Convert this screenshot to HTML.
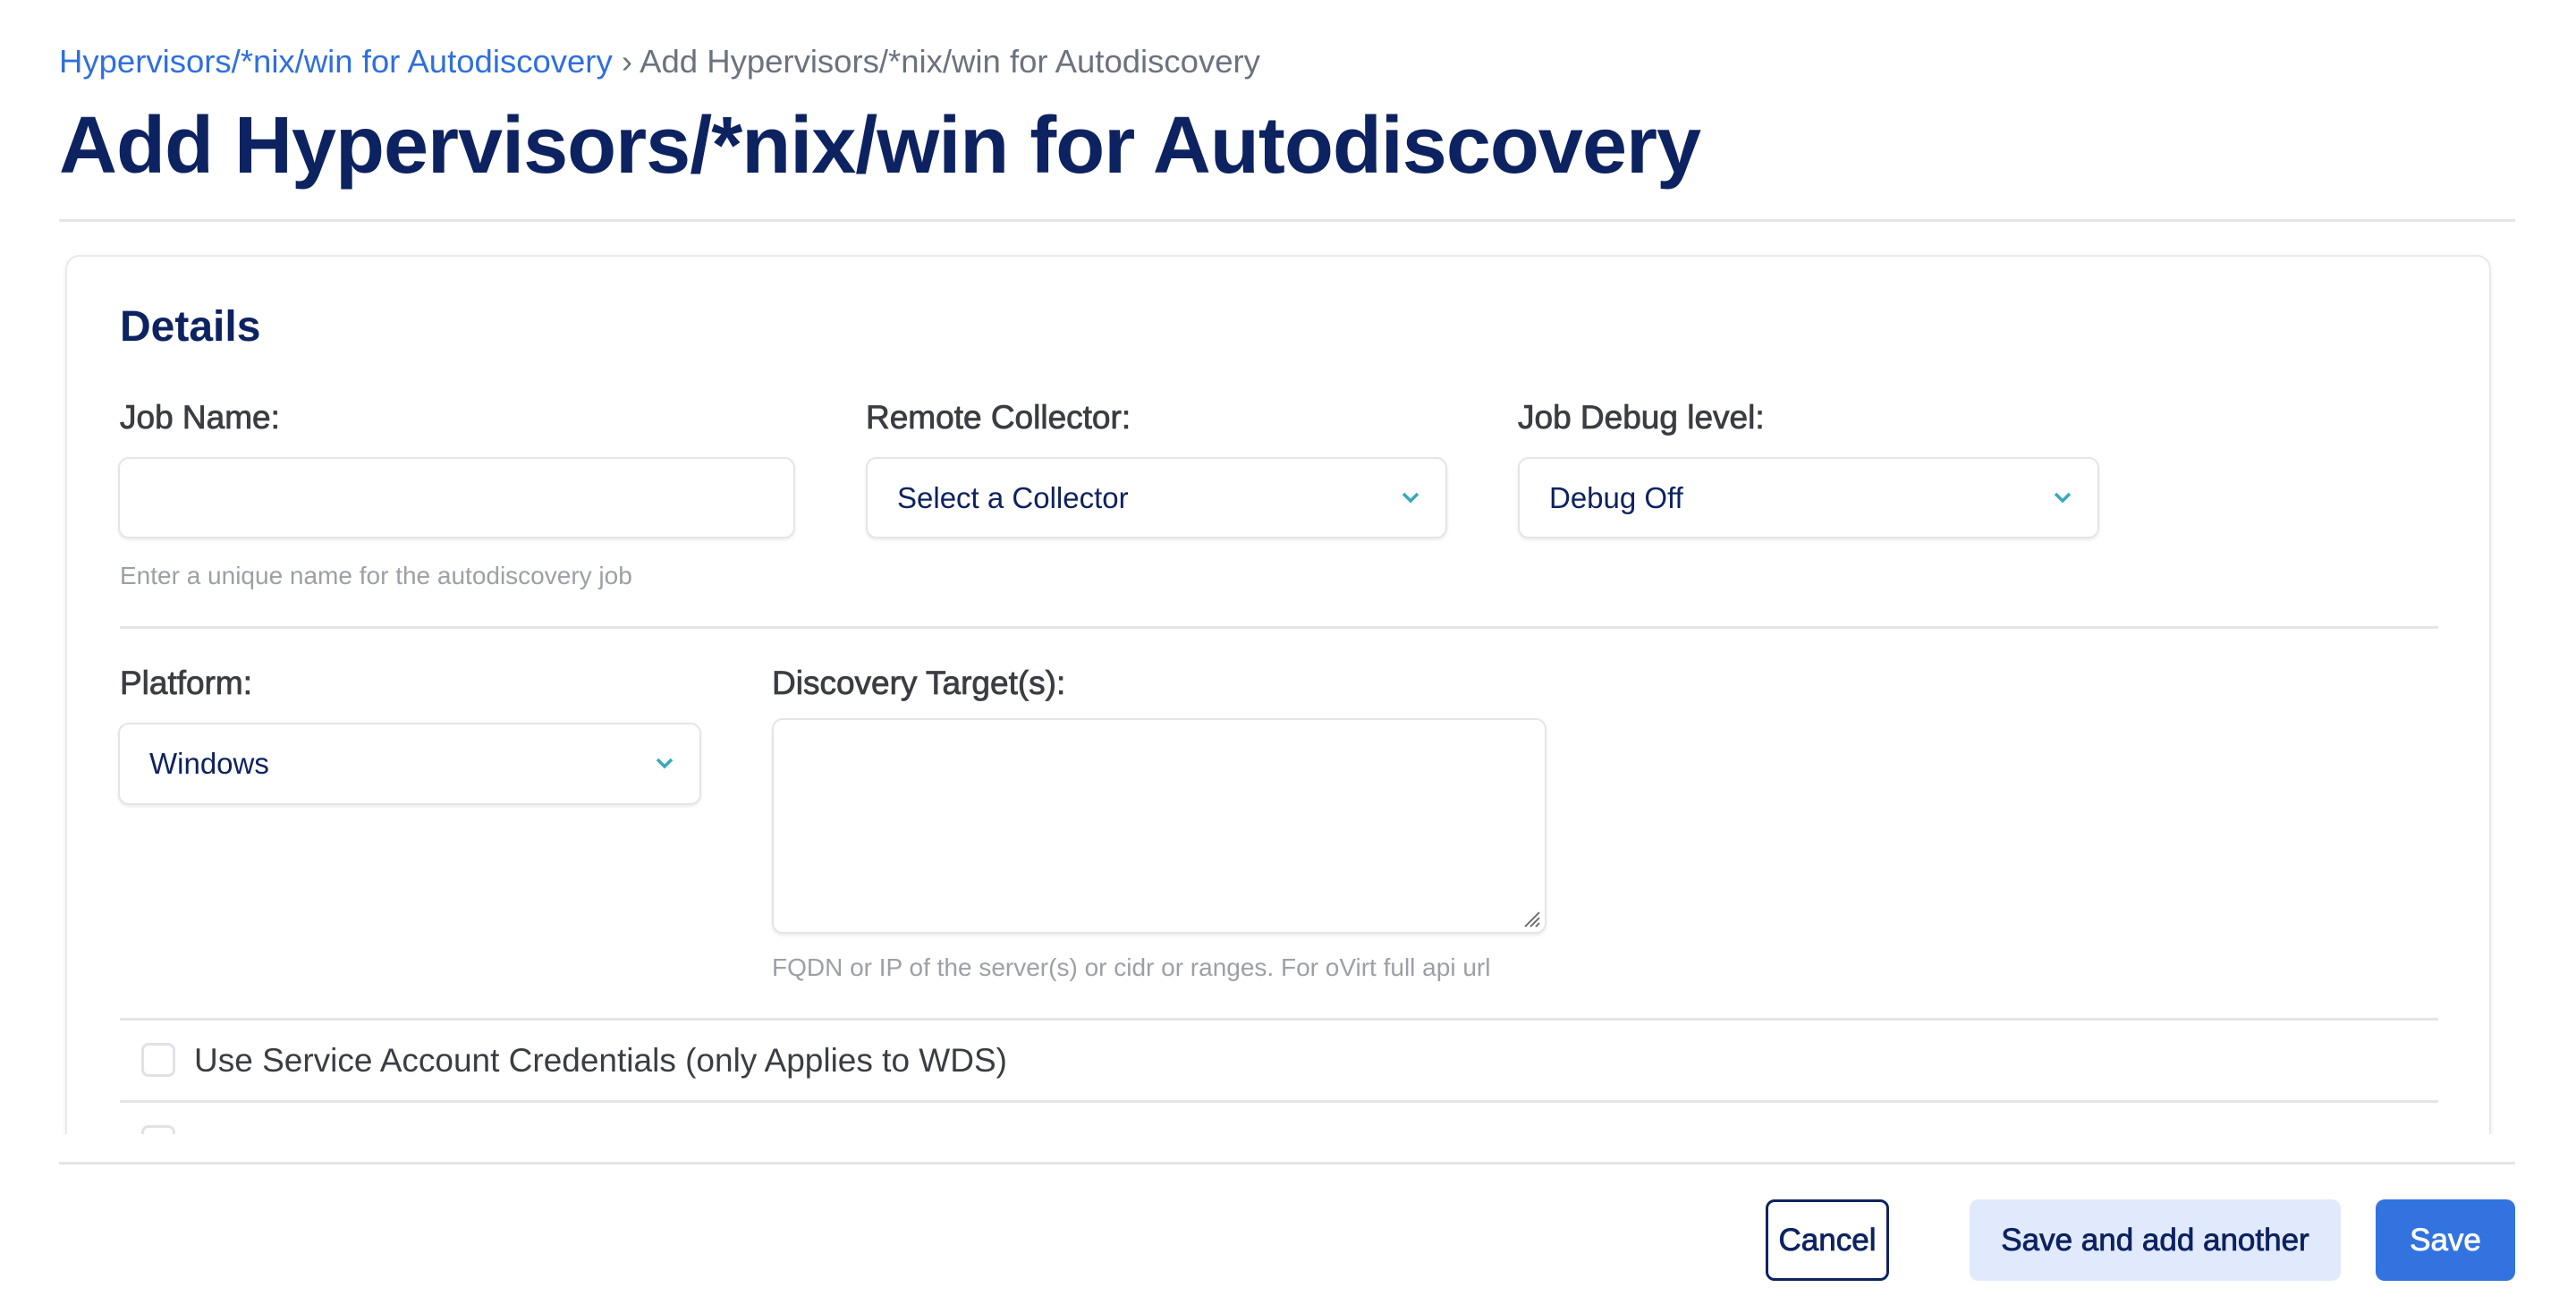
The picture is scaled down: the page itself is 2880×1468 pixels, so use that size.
<!DOCTYPE html>
<html><head><meta charset="utf-8"><style>
*{box-sizing:border-box;margin:0;padding:0}
body{width:2880px;height:1460px;background:#fff;font-family:"Liberation Sans",sans-serif;position:relative;overflow:hidden}
.a{position:absolute;white-space:nowrap}
.crumb{left:66px;top:48px;font-size:36.5px;color:#6b7280}
.crumb b{font-weight:normal;color:#2f6fde}
.title{left:66px;top:112px;font-size:90px;font-weight:bold;color:#0d2260;letter-spacing:-1px}
.hr{position:absolute;height:3px;background:#e3e5e8}
.card{position:absolute;left:73px;top:285px;width:2712px;height:1100px;border:2px solid #e8e9eb;border-radius:16px;box-shadow:0 2px 6px rgba(0,0,0,.06)}
.clip{position:absolute;left:0;top:1268px;width:2880px;height:200px;background:#fff}
.h2{left:134px;top:338px;font-size:48px;font-weight:bold;color:#0d2260}
.lbl{font-size:37px;color:#3a3d42;-webkit-text-stroke:0.8px #3a3d42}
.box{position:absolute;border:2px solid #e3e5e8;border-radius:12px;box-shadow:0 2px 3px rgba(0,0,0,.08);background:#fff}
.sel{font-size:33px;color:#0d2260;padding-left:33px;display:flex;align-items:center}
.chev{position:absolute;right:28px;top:50%;margin-top:-9px}
.help{font-size:28px;color:#9ca0a6}
.btn{position:absolute;top:1341px;height:91px;border-radius:10px;font-size:35px;-webkit-text-stroke:0.8px currentColor;display:flex;align-items:center;justify-content:center}
</style></head><body>
<div class="a crumb"><b>Hypervisors/*nix/win for Autodiscovery</b> › Add Hypervisors/*nix/win for Autodiscovery</div>
<div class="a title">Add Hypervisors/*nix/win for Autodiscovery</div>
<div class="hr" style="left:66px;top:245px;width:2746px"></div>
<div class="card"></div>
<div class="a h2">Details</div>
<div class="a lbl" style="left:134px;top:446px">Job Name:</div>
<div class="a lbl" style="left:968px;top:446px">Remote Collector:</div>
<div class="a lbl" style="left:1697px;top:446px">Job Debug level:</div>
<div class="box" style="left:132px;top:511px;width:757px;height:91px"></div>
<div class="box sel" style="left:968px;top:511px;width:650px;height:91px">Select a Collector<svg class="chev" width="22" height="16" viewBox="0 0 22 16"><path d="M3 4l8 8 8-8" fill="none" stroke="#3aa9bc" stroke-width="3.5"/></svg></div>
<div class="box sel" style="left:1697px;top:511px;width:650px;height:91px">Debug Off<svg class="chev" width="22" height="16" viewBox="0 0 22 16"><path d="M3 4l8 8 8-8" fill="none" stroke="#3aa9bc" stroke-width="3.5"/></svg></div>
<div class="a help" style="left:134px;top:628px">Enter a unique name for the autodiscovery job</div>
<div class="hr" style="left:134px;top:700px;width:2592px"></div>
<div class="a lbl" style="left:134px;top:743px">Platform:</div>
<div class="a lbl" style="left:863px;top:743px">Discovery Target(s):</div>
<div class="box sel" style="left:132px;top:808px;width:652px;height:92px">Windows<svg class="chev" width="22" height="16" viewBox="0 0 22 16"><path d="M3 4l8 8 8-8" fill="none" stroke="#3aa9bc" stroke-width="3.5"/></svg></div>
<div class="box" style="left:863px;top:803px;width:866px;height:241px"><svg style="position:absolute;right:4px;bottom:4px" width="22" height="22" viewBox="0 0 22 22"><path d="M20 4L4 20M20 10L10 20M20 16L16 20" stroke="#666" stroke-width="1.8"/></svg></div>
<div class="a help" style="left:863px;top:1066px">FQDN or IP of the server(s) or cidr or ranges. For oVirt full api url</div>
<div class="hr" style="left:134px;top:1138px;width:2592px"></div>
<div class="box" style="left:158px;top:1166px;width:38px;height:38px;border:3px solid #e0e2e6;border-radius:8px;box-shadow:none"></div>
<div class="a" style="left:217px;top:1165px;font-size:37px;color:#3a3d42">Use Service Account Credentials (only Applies to WDS)</div>
<div class="hr" style="left:134px;top:1230px;width:2592px"></div>
<div class="box" style="left:158px;top:1258px;width:38px;height:38px;border:3px solid #e0e2e6;border-radius:8px;box-shadow:none"></div>
<div class="clip"></div>
<div class="hr" style="left:66px;top:1299px;width:2746px"></div>
<div class="btn" style="left:1974px;width:138px;border:3px solid #0d2260;color:#0d2260;background:#fff">Cancel</div>
<div class="btn" style="left:2202px;width:415px;background:#e1eafc;color:#0d2260">Save and add another</div>
<div class="btn" style="left:2656px;width:156px;background:#3273e0;color:#fff">Save</div>
</body></html>
